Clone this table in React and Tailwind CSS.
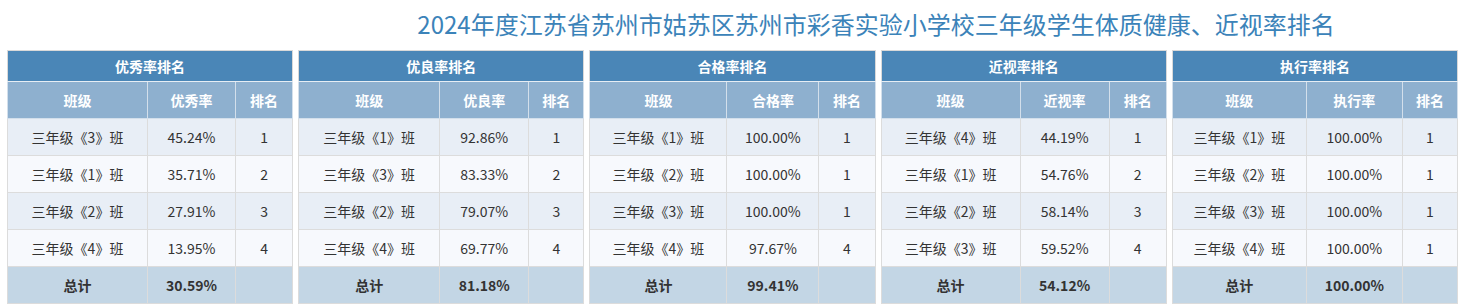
const tables = [
  {
    title: "优秀率排名",
    col: "优秀率",
    widths: [140, 88],
    rows: [
      ["三年级《3》班", "45.24%", "1"],
      ["三年级《1》班", "35.71%", "2"],
      ["三年级《2》班", "27.91%", "3"],
      ["三年级《4》班", "13.95%", "4"],
    ],
    total: "30.59%",
  },
  {
    title: "优良率排名",
    col: "优良率",
    widths: [141, 89],
    rows: [
      ["三年级《1》班", "92.86%", "1"],
      ["三年级《3》班", "83.33%", "2"],
      ["三年级《2》班", "79.07%", "3"],
      ["三年级《4》班", "69.77%", "4"],
    ],
    total: "81.18%",
  },
  {
    title: "合格率排名",
    col: "合格率",
    widths: [137, 92],
    rows: [
      ["三年级《1》班", "100.00%", "1"],
      ["三年级《2》班", "100.00%", "1"],
      ["三年级《3》班", "100.00%", "1"],
      ["三年级《4》班", "97.67%", "4"],
    ],
    total: "99.41%",
  },
  {
    title: "近视率排名",
    col: "近视率",
    widths: [139, 89],
    rows: [
      ["三年级《4》班", "44.19%", "1"],
      ["三年级《1》班", "54.76%", "2"],
      ["三年级《2》班", "58.14%", "3"],
      ["三年级《3》班", "59.52%", "4"],
    ],
    total: "54.12%",
  },
  {
    title: "执行率排名",
    col: "执行率",
    widths: [134, 96],
    rows: [
      ["三年级《1》班", "100.00%", "1"],
      ["三年级《2》班", "100.00%", "1"],
      ["三年级《3》班", "100.00%", "1"],
      ["三年级《4》班", "100.00%", "1"],
    ],
    total: "100.00%",
  },
];

function RankTable({ t }) {
  return (
    <table className="w-full border-collapse border border-[#d9d9d9] table-fixed text-[14px]">
      <colgroup>
        <col style={{ width: t.widths[0] }} />
        <col style={{ width: t.widths[1] }} />
        <col />
      </colgroup>
      <thead>
        <tr className="h-[31px] bg-[#4a86b7] text-white font-bold">
          <th colSpan={3} className="border-b border-[#e6edf4] font-bold">
            {t.title}
          </th>
        </tr>
        <tr className="h-[37px] bg-[#8eb0cf] text-white font-bold">
          <th className="border border-[#d3dfeb] font-bold">班级</th>
          <th className="border border-[#d3dfeb] font-bold">{t.col}</th>
          <th className="border border-[#d3dfeb] font-bold">排名</th>
        </tr>
      </thead>
      <tbody className="text-[#333]">
        {t.rows.map((r, i) => (
          <tr
            key={i}
            className={
              "h-[37px] " + (i % 2 === 0 ? "bg-[#e8eef6]" : "bg-[#f7f9fd]")
            }
          >
            {r.map((c, j) => (
              <td key={j} className="border border-[#dcdcdc] text-center">
                {c}
              </td>
            ))}
          </tr>
        ))}
        <tr className="h-[37px] bg-[#c3d6e5] font-bold">
          <td className="border border-[#dcdcdc] text-center">总计</td>
          <td className="border border-[#dcdcdc] text-center">{t.total}</td>
          <td className="border border-[#dcdcdc] text-center"></td>
        </tr>
      </tbody>
    </table>
  );
}

export default function App() {
  return (
    <div
      className="w-[1464px] h-[306px] bg-white overflow-hidden"
      style={{ fontFamily: '"Noto Sans CJK SC", "Noto Sans", sans-serif' }}
    >
      <div className="h-[50px] pl-[288px] pt-[8px] text-center text-[24px] leading-[32px] text-[#3b83b9]">
        2024年度江苏省苏州市姑苏区苏州市彩香实验小学校三年级学生体质健康、近视率排名
      </div>
      <div className="grid grid-cols-5 gap-[5px] pl-[7px] pr-[6px]">
        {tables.map((t) => (
          <RankTable key={t.title} t={t} />
        ))}
      </div>
    </div>
  );
}
